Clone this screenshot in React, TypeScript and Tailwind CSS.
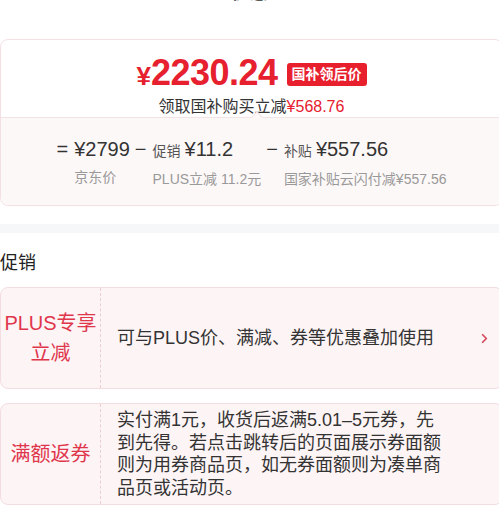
import React from 'react';
import { ChevronRight, X } from 'lucide-react';

const font = "font-['Liberation_Sans','Noto_Sans_CJK_SC',sans-serif]";

interface PartProps {
  op: string;
  tag?: string;
  value: string;
  label: string;
}

const PricePart: React.FC<PartProps> = ({ op, tag, value, label }) => (
  <div className="flex items-start">
    <span className="mr-[6px] text-[20px] leading-[28px] text-[#333]">{op}</span>
    <div className="flex flex-col">
      <div className="flex items-baseline gap-[4px] leading-[28px]">
        {tag && <span className="text-[14px] text-[#555]">{tag}</span>}
        <span className="text-[20px] font-medium text-[#333]">{value}</span>
      </div>
      <span className="mt-[5px] text-[14px] leading-[18px] text-[#999]">{label}</span>
    </div>
  </div>
);

interface PromoProps {
  title: React.ReactNode;
  children: React.ReactNode;
  arrow?: boolean;
}

const PromoCard: React.FC<PromoProps> = ({ title, children, arrow }) => (
  <div className="flex h-[102px] w-[503px] rounded-[8px] border border-[#f3dde1] bg-[#fdf4f5]">
    <div className="flex w-[100px] shrink-0 items-center justify-center border-r border-dashed border-[#ebcdd2] text-center text-[20px] leading-[30px] text-[#e0364c]">
      {title}
    </div>
    <div className="flex flex-1 items-center justify-between pl-[16px] pr-[10px]">
      {children}
      {arrow && <ChevronRight size={15} strokeWidth={2.8} className="text-[#d6485c]" />}
    </div>
  </div>
);

export default function App() {
  return (
    <div className={`${font} h-[511px] w-[499px] overflow-hidden bg-white`}>
      {/* sheet title, mostly scrolled out of view */}
      <div className="-mt-[20px] grid h-[24px] grid-cols-[1fr_auto_1fr] items-center text-[18px] font-bold text-[#333]">
        <span />
        <span>优惠</span>
        <span className="flex justify-end pr-[8px]">
          <X size={14} className="text-[#ccc]" />
        </span>
      </div>

      {/* price breakdown card */}
      <div className="mt-[35px] w-[503px] overflow-hidden rounded-[8px] border border-[#f4e0e3]">
        <div className="flex h-[77px] flex-col items-center pt-[13px]">
          <div className="flex items-center">
            <span className="text-[#e6202e]">
              <span className="text-[26px] font-bold">¥</span>
              <span className="text-[36px] font-bold leading-[40px] tracking-[-0.5px]">2230.24</span>
            </span>
            <span className="ml-[9px] rounded-[3px] bg-[#e8202e] px-[5px] text-[14px] font-bold leading-[23px] text-white">
              国补领后价
            </span>
          </div>
          <div className="mt-[1px] text-[16px] leading-[20px] text-[#333]">
            领取国补购买立减<span className="text-[#e6202e]">¥568.76</span>
          </div>
        </div>
        <div className="relative flex h-[88px] justify-center gap-[5px] border-t border-[#f4e3e5] bg-[#fdf8f8] pt-[17px]">
          <div className="absolute -top-[5px] left-[252px] h-[8px] w-[8px] rotate-45 border-l border-t border-[#f4e3e5] bg-[#fdf8f8]" />
          <PricePart op="=" value="¥2799" label="京东价" />
          <PricePart op="−" tag="促销" value="¥11.2" label="PLUS立减 11.2元" />
          <PricePart op="−" tag="补贴" value="¥557.56" label="国家补贴云闪付减¥557.56" />
        </div>
      </div>

      <div className="mt-[18px] h-[9px] bg-[#f6f7f9]" />

      <div className="mt-[14px] text-[18px] leading-[32px] text-[#222]">促销</div>

      <div className="mt-[8px] flex flex-col gap-[14px]">
        <PromoCard
          arrow
          title={
            <span>
              PLUS专享
              <br />
              立减
            </span>
          }
        >
          <span className="text-[18px] text-[#333]">可与PLUS价、满减、券等优惠叠加使用</span>
        </PromoCard>
        <PromoCard title="满额返券">
          <p className="w-[330px] text-[18px] leading-[22.5px] text-[#333]">
            实付满1元，收货后返满5.01–5元券，先到先得。若点击跳转后的页面展示券面额则为用券商品页，如无券面额则为凑单商品页或活动页。
          </p>
        </PromoCard>
      </div>
    </div>
  );
}
